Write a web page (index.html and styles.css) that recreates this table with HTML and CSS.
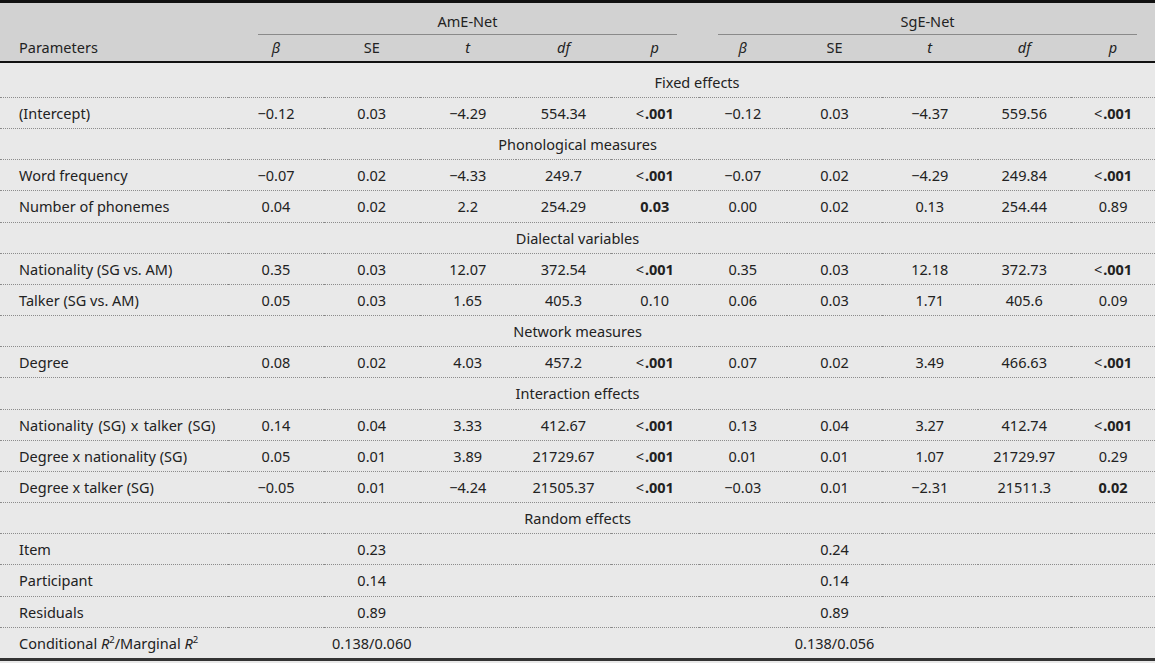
FILE: index.html
```html
<!DOCTYPE html>
<html>
<head>
<meta charset="utf-8">
<link rel="stylesheet" href="styles.css">
</head>
<body>
<table class="tbl">
  <colgroup>
    <col class="c-param">
    <col class="c-b1"><col class="c-se1"><col class="c-t1"><col class="c-df1"><col class="c-p1">
    <col class="c-b2"><col class="c-se2"><col class="c-t2"><col class="c-df2"><col class="c-p2">
  </colgroup>
  <thead>
    <tr class="h1">
      <th></th>
      <th colspan="5"><div class="grp grp-a">AmE-Net</div></th>
      <th colspan="5"><div class="grp grp-b">SgE-Net</div></th>
    </tr>
    <tr class="h2">
      <th class="lbl">Parameters</th>
      <th><i>β</i></th><th>SE</th><th><i>t</i></th><th><i>df</i></th><th><i>p</i></th>
      <th><i>β</i></th><th>SE</th><th><i>t</i></th><th><i>df</i></th><th><i>p</i></th>
    </tr>
  </thead>
  <tbody>
    <tr class="sec first"><td></td><td colspan="10" class="shift">Fixed effects</td></tr>
    <tr><td class="lbl">(Intercept)</td><td>−0.12</td><td>0.03</td><td>−4.29</td><td>554.34</td><td><span class="lt">&lt;</span><b>.001</b></td><td>−0.12</td><td>0.03</td><td>−4.37</td><td>559.56</td><td><span class="lt">&lt;</span><b>.001</b></td></tr>
    <tr class="sec"><td colspan="11">Phonological measures</td></tr>
    <tr><td class="lbl">Word frequency</td><td>−0.07</td><td>0.02</td><td>−4.33</td><td>249.7</td><td><span class="lt">&lt;</span><b>.001</b></td><td>−0.07</td><td>0.02</td><td>−4.29</td><td>249.84</td><td><span class="lt">&lt;</span><b>.001</b></td></tr>
    <tr><td class="lbl">Number of phonemes</td><td>0.04</td><td>0.02</td><td>2.2</td><td>254.29</td><td><b>0.03</b></td><td>0.00</td><td>0.02</td><td>0.13</td><td>254.44</td><td>0.89</td></tr>
    <tr class="sec"><td colspan="11">Dialectal variables</td></tr>
    <tr><td class="lbl">Nationality (SG vs. AM)</td><td>0.35</td><td>0.03</td><td>12.07</td><td>372.54</td><td><span class="lt">&lt;</span><b>.001</b></td><td>0.35</td><td>0.03</td><td>12.18</td><td>372.73</td><td><span class="lt">&lt;</span><b>.001</b></td></tr>
    <tr><td class="lbl">Talker (SG vs. AM)</td><td>0.05</td><td>0.03</td><td>1.65</td><td>405.3</td><td>0.10</td><td>0.06</td><td>0.03</td><td>1.71</td><td>405.6</td><td>0.09</td></tr>
    <tr class="sec"><td colspan="11">Network measures</td></tr>
    <tr><td class="lbl">Degree</td><td>0.08</td><td>0.02</td><td>4.03</td><td>457.2</td><td><span class="lt">&lt;</span><b>.001</b></td><td>0.07</td><td>0.02</td><td>3.49</td><td>466.63</td><td><span class="lt">&lt;</span><b>.001</b></td></tr>
    <tr class="sec"><td colspan="11">Interaction effects</td></tr>
    <tr><td class="lbl wide">Nationality (SG) x talker (SG)</td><td>0.14</td><td>0.04</td><td>3.33</td><td>412.67</td><td><span class="lt">&lt;</span><b>.001</b></td><td>0.13</td><td>0.04</td><td>3.27</td><td>412.74</td><td><span class="lt">&lt;</span><b>.001</b></td></tr>
    <tr><td class="lbl">Degree x nationality (SG)</td><td>0.05</td><td>0.01</td><td>3.89</td><td>21729.67</td><td><span class="lt">&lt;</span><b>.001</b></td><td>0.01</td><td>0.01</td><td>1.07</td><td>21729.97</td><td>0.29</td></tr>
    <tr><td class="lbl">Degree x talker (SG)</td><td>−0.05</td><td>0.01</td><td>−4.24</td><td>21505.37</td><td><span class="lt">&lt;</span><b>.001</b></td><td>−0.03</td><td>0.01</td><td>−2.31</td><td>21511.3</td><td><b>0.02</b></td></tr>
    <tr class="sec"><td colspan="11">Random effects</td></tr>
    <tr><td class="lbl">Item</td><td></td><td>0.23</td><td></td><td></td><td></td><td></td><td>0.24</td><td></td><td></td><td></td></tr>
    <tr><td class="lbl">Participant</td><td></td><td>0.14</td><td></td><td></td><td></td><td></td><td>0.14</td><td></td><td></td><td></td></tr>
    <tr><td class="lbl">Residuals</td><td></td><td>0.89</td><td></td><td></td><td></td><td></td><td>0.89</td><td></td><td></td><td></td></tr>
    <tr class="last"><td class="lbl">Conditional <i>R</i><sup>2</sup>/Marginal <i>R</i><sup>2</sup></td><td></td><td>0.138/0.060</td><td></td><td></td><td></td><td></td><td>0.138/0.056</td><td></td><td></td><td></td></tr>
  </tbody>
</table>
</body>
</html>
```

FILE: styles.css
```css
html, body {
  margin: 0;
  padding: 0;
  background: #e9e9e9;
}

.tbl {
  width: 1155px;
  table-layout: fixed;
  border-collapse: collapse;
  font-family: "Noto Sans", "Open Sans", sans-serif;
  font-size: 14.5px;
  color: #222;
}

.c-param { width: 228px; }
.c-b1 { width: 96px; }
.c-se1 { width: 95.5px; }
.c-t1 { width: 96.5px; }
.c-df1 { width: 95px; }
.c-p1 { width: 87.5px; }
.c-b2 { width: 88.5px; }
.c-se2 { width: 95px; }
.c-t2 { width: 95.5px; }
.c-df2 { width: 93.5px; }
.c-p2 { width: 84px; }

.tbl th, .tbl td {
  padding: 0;
  text-align: center;
  font-weight: normal;
  line-height: 20px;
  white-space: nowrap;
}

.tbl thead {
  background: #d2d2d2;
}

.tbl thead tr.h1 th {
  border-top: 3px solid #111;
  padding-top: 8px;
  padding-bottom: 0;
  vertical-align: top;
}

.grp {
  padding-bottom: 3px;
  border-bottom: 1px solid #8a8a8a;
}

.grp-a { margin: 0 21.5px 0 30px; }
.grp-b { margin: 0 18px 0 19.5px; }

.tbl thead tr.h2 th {
  padding-top: 2px;
  padding-bottom: 4px;
  border-bottom: 2px solid #111;
}

.tbl .lbl {
  text-align: left;
  padding-left: 19px;
}

.tbl .wide {
  word-spacing: 1.5px;
}

.tbl tbody td {
  padding-top: 5px;
  padding-bottom: 5.17px;
  border-bottom: 1px dotted #8c8c8c;
}

.tbl tbody tr.first td {
  padding-top: 9px;
  padding-bottom: 5px;
}

.tbl tbody td.shift {
  padding-left: 11px;
}

.tbl tbody tr.last td {
  border-bottom: 3px solid #333;
}

.tbl b {
  font-weight: bold;
}

.tbl .lt {
  margin-right: 1px;
}

.tbl sup {
  font-size: 9.5px;
  line-height: 0;
  vertical-align: 6px;
}
```
